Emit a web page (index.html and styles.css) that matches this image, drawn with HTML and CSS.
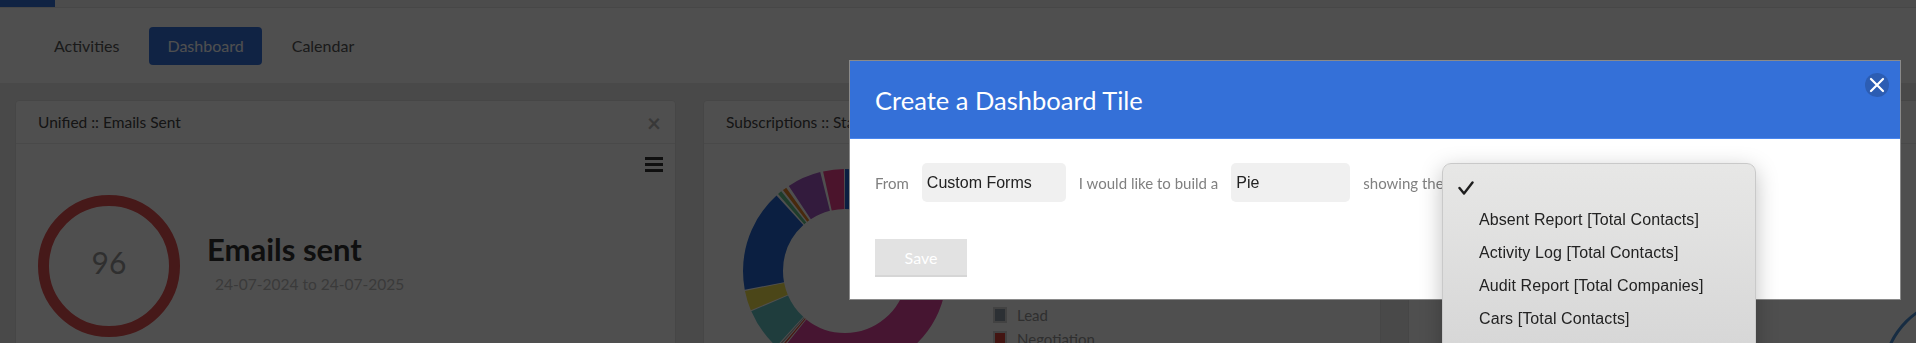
FILE: index.html
```html
<!DOCTYPE html>
<html lang="en">
<head>
  <meta charset="UTF-8">
  <meta name="viewport" content="width=device-width, initial-scale=1.0">
  <title>Dashboard</title>
  <link rel="stylesheet" href="styles.css">
</head>
<body>
  <div class="topbar"><span class="brand"></span></div>

  <nav class="tabs">
    <a class="tab" href="#">Activities</a>
    <a class="tab active" href="#">Dashboard</a>
    <a class="tab" href="#">Calendar</a>
  </nav>

  <main class="tiles">
    <section class="tile">
      <header class="tile-head">
        <span>Unified :: Emails Sent</span>
        <span class="tile-close">&times;</span>
      </header>
      <div class="tile-body">
        <div class="tile-menu"><span></span><span></span><span></span></div>
        <div class="stat">
          <div class="stat-ring">96</div>
          <div class="stat-text">
            <h2>Emails sent</h2>
            <p>24-07-2024 to 24-07-2025</p>
          </div>
        </div>
      </div>
    </section>

    <section class="tile">
      <header class="tile-head">
        <span>Subscriptions :: Stage</span>
        <span class="tile-close">&times;</span>
      </header>
      <div class="tile-body chart-body">
        <!-- donut: offsets and lengths are degrees * 1.4312 (r = 82) -->
        <svg class="donut" width="204" height="204" viewBox="0 0 204 204">
          <g transform="rotate(-90 102 102)" fill="none" stroke-width="40">
            <circle cx="102" cy="102" r="82" stroke="#2466d0" stroke-dasharray="56.2 515.2" stroke-dashoffset="0"/>
            <circle cx="102" cy="102" r="82" stroke="#9aa5b1" stroke-dasharray="41.9 515.2" stroke-dashoffset="-57.2"/>
            <circle cx="102" cy="102" r="82" stroke="#5cb85c" stroke-dasharray="41.9 515.2" stroke-dashoffset="-100.2"/>
            <circle cx="102" cy="102" r="82" stroke="#e0469e" stroke-dasharray="169.3 515.2" stroke-dashoffset="-143.1"/>
            <circle cx="102" cy="102" r="82" stroke="#e74c3c" stroke-dasharray="1.3 515.2" stroke-dashoffset="-313.4"/>
            <circle cx="102" cy="102" r="82" stroke="#aaaaaa" stroke-dasharray="1.3 515.2" stroke-dashoffset="-315.6"/>
            <circle cx="102" cy="102" r="82" stroke="#66c4c6" stroke-dasharray="34.8 515.2" stroke-dashoffset="-317.7"/>
            <circle cx="102" cy="102" r="82" stroke="#f3e04e" stroke-dasharray="16.2 515.2" stroke-dashoffset="-353.5"/>
            <circle cx="102" cy="102" r="82" stroke="#2466d0" stroke-dasharray="83.4 515.2" stroke-dashoffset="-370.7"/>
            <circle cx="102" cy="102" r="82" stroke="#62c08a" stroke-dasharray="3.3 515.2" stroke-dashoffset="-455.8"/>
            <circle cx="102" cy="102" r="82" stroke="#e8862a" stroke-dasharray="3.3 515.2" stroke-dashoffset="-460.8"/>
            <circle cx="102" cy="102" r="82" stroke="#a658c4" stroke-dasharray="27.6 515.2" stroke-dashoffset="-466.6"/>
            <circle cx="102" cy="102" r="82" stroke="#f0418f" stroke-dasharray="16.9 515.2" stroke-dashoffset="-496.6"/>
          </g>
        </svg>
        <ul class="legend">
          <li><i class="swatch blue"></i>Won</li>
          <li><i class="swatch grey"></i>Lost</li>
          <li><i class="swatch green"></i>Prospect</li>
          <li><i class="swatch pink"></i>Qualified</li>
          <li><i class="swatch teal"></i>Proposal</li>
          <li><i class="swatch yellow"></i>Contacted</li>
          <li><i class="swatch slate"></i>Lead</li>
          <li><i class="swatch red"></i>Negotiation</li>
        </ul>
      </div>
    </section>

    <section class="tile">
      <header class="tile-head">
        <span>Unified :: Calls Made</span>
      </header>
      <div class="tile-body arc-body">
        <svg width="166" height="166" viewBox="0 0 166 166">
          <circle cx="83" cy="83" r="80" fill="none" stroke="#4a8fd6" stroke-width="3"/>
        </svg>
      </div>
    </section>
  </main>

  <div class="backdrop"></div>

  <div class="modal">
    <div class="modal-head">
      <h1>Create a Dashboard Tile</h1>
      <button class="modal-close" type="button">
        <svg width="24" height="24" viewBox="0 0 24 24">
          <path d="M6 6 L18 18 M18 6 L6 18" stroke="#fff" stroke-width="2.2" stroke-linecap="round"/>
        </svg>
      </button>
    </div>
    <form class="modal-body">
      <div class="builder">
        <label for="source">From</label>
        <select id="source" class="field source"><option>Custom Forms</option></select>
        <label for="chartType">I would like to build a</label>
        <select id="chartType" class="field"><option>Pie</option></select>
        <label for="report">showing the</label>
        <select id="report" class="field"><option></option></select>

        <ul class="picker">
          <li class="checked">
            <svg width="16" height="14" viewBox="0 0 16 14">
              <path d="M1.5 7 L6 12.5 L14.5 1.5" fill="none" stroke="#1e1e1e" stroke-width="2.4" stroke-linecap="round" stroke-linejoin="round"/>
            </svg>
          </li>
          <li>Absent Report [Total Contacts]</li>
          <li>Activity Log [Total Contacts]</li>
          <li>Audit Report [Total Companies]</li>
          <li>Cars [Total Contacts]</li>
        </ul>
      </div>
      <button type="button" class="save">Save</button>
    </form>
  </div>
</body>
</html>
```

FILE: styles.css
```css
html, body {
  height: 343px;
  overflow: hidden;
}
body {
  margin: 0;
  font-family: Lato, "Liberation Sans", sans-serif;
  background-color: #ececec;
  color: #444;
}

/* top strip + tabs */
.topbar {
  height: 7px;
  background-color: #f6f6f6;
  border-bottom: 1px solid #e4e4e4;
}
.brand {
  display: block;
  width: 55px;
  height: 7px;
  background-color: #3470d8;
}
.tabs {
  display: flex;
  align-items: center;
  gap: 12px;
  height: 75px;
  padding-left: 36px;
  background-color: #fff;
}
.tab {
  height: 38px;
  line-height: 38px;
  padding: 0 18px;
  border-radius: 4px;
  font-size: 16px;
  color: #555;
  text-decoration: none;
}
.tab.active {
  background-color: #3672dc;
  color: #fff;
}

/* tiles */
.tiles {
  display: grid;
  grid-template-columns: 661px 678px 661px;
  column-gap: 27px;
  padding: 17px 15px 0;
}
.tile {
  height: 320px;
  background-color: #fff;
  border: 1px solid #e2e2e2;
  border-radius: 4px;
}
.tile-head {
  display: flex;
  align-items: center;
  justify-content: space-between;
  height: 42px;
  padding: 0 14px 0 22px;
  border-bottom: 1px solid #ececec;
  font-size: 15.5px;
  color: #444;
}
.tile-close {
  font-size: 24px;
  font-weight: bold;
  color: #b5b5b5;
}
.tile-body {
  padding: 13px 12px 0 22px;
}
.tile-menu {
  display: flex;
  flex-direction: column;
  gap: 3px;
  width: 18px;
  margin-left: auto;
}
.tile-menu span {
  height: 3px;
  background-color: #333;
}
.stat {
  display: flex;
  align-items: center;
  gap: 27px;
  margin-top: 23px;
}
.stat-ring {
  display: flex;
  align-items: center;
  justify-content: center;
  width: 142px;
  height: 142px;
  box-sizing: border-box;
  padding-bottom: 8px;
  border: 11px solid #e35050;
  border-radius: 50%;
  font-size: 30px;
  color: #999;
}
.stat-text {
  margin-bottom: 8px;
}
.stat-text h2 {
  margin: 0;
  font-size: 31px;
  font-weight: bold;
  line-height: 1.2;
  color: #333;
}
.stat-text p {
  margin: 6px 0 0 8px;
  font-size: 15.5px;
  color: #bbb;
}

.chart-body {
  display: flex;
  padding: 15px 0 0 39px;
}
.donut {
  margin-top: 10px;
}
.legend {
  list-style: none;
  margin: 0 0 0 46px;
  padding: 0;
}
.legend li {
  display: flex;
  align-items: center;
  gap: 10px;
  height: 24px;
  font-size: 15px;
  color: #999;
}
.swatch {
  width: 10px;
  height: 12px;
  border: 2px solid #d6d6d6;
}
.swatch.blue { background-color: #2466d0; }
.swatch.grey { background-color: #9aa5b1; }
.swatch.green { background-color: #5cb85c; }
.swatch.pink { background-color: #e0469e; }
.swatch.teal { background-color: #66c4c6; }
.swatch.yellow { background-color: #f3e04e; }
.swatch.slate { background-color: #8e9ca9; }
.swatch.red { background-color: #d9443a; }

.arc-body {
  padding: 151px 0 0 471px;
}

/* modal */
.backdrop {
  position: fixed;
  inset: 0;
  background-color: rgba(0, 0, 0, 0.69);
}
.modal {
  position: absolute;
  top: 61px;
  left: 850px;
  width: 1050px;
  background-color: #fff;
  box-shadow: 0 0 0 1px #8a8a8a;
}
.modal-head {
  display: flex;
  justify-content: space-between;
  height: 77px;
  padding: 0 11px 0 25px;
  background-color: #3470d8;
  border-bottom: 1px solid #4a86ee;
}
.modal-head h1 {
  margin: 0;
  align-self: center;
  font-size: 25.5px;
  font-weight: normal;
  color: #fff;
}
.modal-close {
  display: flex;
  align-items: center;
  justify-content: center;
  width: 24px;
  height: 24px;
  margin-top: 12px;
  padding: 0;
  border: none;
  border-radius: 50%;
  background-color: #2c5db3;
  cursor: pointer;
}
.modal-body {
  padding: 24px 25px 22px;
}
.builder {
  position: relative;
  display: flex;
  align-items: center;
  gap: 13px;
}
.builder label {
  font-size: 15px;
  color: #808080;
}
.field {
  appearance: none;
  width: 119px;
  height: 39px;
  padding: 0 5px;
  border: none;
  border-radius: 5px;
  background-color: #f0f0f0;
  font-family: "Liberation Sans", Arial, sans-serif;
  font-size: 16px;
  color: #222;
}
.field.source {
  width: 144px;
}
.save {
  width: 92px;
  height: 38px;
  margin-top: 37px;
  border: none;
  border-bottom: 2px solid #d6d6d6;
  background-color: #e2e2e2;
  font-family: Lato, sans-serif;
  font-size: 16px;
  color: #fff;
}

/* open select list */
.picker {
  position: absolute;
  top: 0;
  left: 567px;
  width: 314px;
  height: 230px;
  box-sizing: border-box;
  margin: 0;
  padding: 9px 0 0;
  list-style: none;
  border: 1px solid #c9c9c9;
  border-radius: 9px;
  background: linear-gradient(#e7e7e6, #d7d7d7 180px);
  box-shadow: 0 6px 22px rgba(0, 0, 0, 0.25);
  font-family: "Liberation Sans", Arial, sans-serif;
  font-size: 16px;
  letter-spacing: 0.1px;
  color: #222;
}
.picker li {
  height: 33px;
  line-height: 33px;
  padding-left: 36px;
}
.picker li.checked {
  display: flex;
  align-items: center;
  height: 30px;
  padding-left: 15px;
}
```
